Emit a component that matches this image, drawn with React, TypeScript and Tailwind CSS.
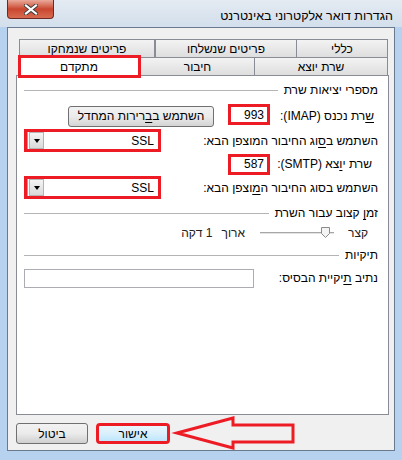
import React from "react";

const red = "border-[#ed1c24]";

function U({ children }: { children: React.ReactNode }) {
  return <span className="underline underline-offset-[2px]">{children}</span>;
}

function GroupTitle({ children }: { children: React.ReactNode }) {
  return (
    <div className="flex items-center gap-[6px] h-[14px]">
      <span className="whitespace-nowrap">{children}</span>
      <div className="flex-1 h-px bg-[#b4b4b4]" />
    </div>
  );
}

function Combo() {
  return (
    <div className={`w-[137px] h-[23px] border-[3px] ${red} bg-white flex items-center`}>
      <span className="flex-1 text-right pr-[4px] leading-none">SSL</span>
      <div className="w-[17px] h-[17px] border-l border-[#a0a0a0] pl-px flex">
        <div className="flex-1 border border-[#b4b4b4] bg-gradient-to-b from-[#f5f5f5] to-[#d9d9d9] flex items-center justify-center">
          <div className="w-0 h-0 border-l-[3.5px] border-r-[3.5px] border-t-[4px] border-l-transparent border-r-transparent border-t-black" />
        </div>
      </div>
    </div>
  );
}

function Tab({ label, className }: { label: string; className: string }) {
  return (
    <div
      className={`h-[18px] flex items-center justify-center border-t border-l border-[#898c95] bg-gradient-to-b from-[#f3f3f3] to-[#dedede] ${className}`}
    >
      {label}
    </div>
  );
}

export default function App() {
  return (
    <div
      dir="rtl"
      className="w-[402px] h-[460px] bg-[#b7d2ef] flex flex-col font-['Liberation_Sans','DejaVu_Sans',sans-serif] text-[12px] text-black leading-none"
    >
      {/* title bar */}
      <div className="h-[27px] bg-gradient-to-b from-[#e4ebf2] to-[#d3dfec] flex justify-between items-start pr-[9px] pl-[7px]">
        <span className="mt-[10px] text-[12.5px] whitespace-nowrap">הגדרות דואר אלקטרוני באינטרנט</span>
        <div className="w-[47px] h-[19px] rounded-b-[4px] border border-t-0 border-[#6e2a22] bg-gradient-to-b from-[#e9a99b] via-[#c9462f] to-[#d86b4f] flex items-center justify-center">
          <svg width="14" height="11" viewBox="0 0 14 11">
            <path d="M2 1.5 L12 9.5 M12 1.5 L2 9.5" stroke="#3b3b3b" strokeWidth="4" strokeLinecap="square" />
            <path d="M2 1.5 L12 9.5 M12 1.5 L2 9.5" stroke="#ffffff" strokeWidth="2.2" strokeLinecap="square" />
          </svg>
        </div>
      </div>

      {/* dialog body */}
      <div className="relative mx-[7px] h-[424px] border border-[#6a7a8e] bg-[#f0f0f0] pt-[11px] pl-[8px] pr-[5px]">
        <div className="w-[373px]">
          <div className="flex h-[18px] pr-px">
            <Tab label="כללי" className="w-[92px] border-r" />
            <Tab label="פריטים שנשלחו" className="w-[141px]" />
            <Tab label="פריטים שנמחקו" className="w-[136px] border-r" />
          </div>
          <div className="flex h-[18px] pr-px">
            <Tab label="שרת יוצא" className="w-[134px] border-r" />
            <Tab label="חיבור" className="w-[114px]" />
            <div className="relative w-[122px] h-[18px] border-t border-l border-r border-[#898c95] bg-white flex items-center justify-center z-10">
              מתקדם
              <div className={`absolute -top-[3px] left-[-1px] -right-[2px] -bottom-[3px] border-[3px] ${red}`} />
            </div>
          </div>

          {/* tab page */}
          <div className="h-[340px] border border-[#898c95] bg-white pl-[7px] pr-[10px] flex flex-col">
            <div className="mt-[7px]">
              <GroupTitle>מספרי יציאות שרת</GroupTitle>
            </div>

            <div className="mt-[8px] h-[22px] flex items-center">
              <span className="w-[108px] pr-[4px] whitespace-nowrap">
                <U>ש</U>רת נכנס (IMAP):
              </span>
              <div className={`w-[42px] h-[21px] border-[3px] ${red} bg-white flex items-center pr-[3px] -mt-[3px]`}>993</div>
              <button className="mr-[14px] w-[146px] h-[21px] rounded-[3px] border border-[#707070] bg-gradient-to-b from-[#f2f2f2] via-[#ebebeb] to-[#d4d4d4] leading-none">
                השתמש ב<U>ב</U>רירות המחדל
              </button>
            </div>

            <div className="mt-[2px] h-[23px] flex items-center justify-between">
              <span className="whitespace-nowrap">
                השתמש ב<U>ס</U>וג החיבור המוצפן הבא:
              </span>
              <Combo />
            </div>

            <div className="mt-[1px] h-[22px] flex items-center">
              <span className="w-[108px] pr-[6px] whitespace-nowrap">
                שרת י<U>ו</U>צא (SMTP):
              </span>
              <div className={`w-[42px] h-[21px] border-[3px] ${red} bg-white flex items-center pr-[3px]`}>587</div>
            </div>

            <div className="mt-[1px] h-[23px] flex items-center justify-between">
              <span className="whitespace-nowrap">
                השתמש בסוג החיבור ה<U>מ</U>וצפן הבא:
              </span>
              <Combo />
            </div>

            <div className="mt-[7px]">
              <GroupTitle>
                זמ<U>ן</U> קצוב עבור השרת
              </GroupTitle>
            </div>

            <div className="mt-[6px] h-[14px] flex items-center pr-[10px] text-[#222]">
              <span className="w-[20px]">קצר</span>
              <div className="relative mr-[14px] w-[74px] h-[14px] flex items-center">
                <div className="w-full h-[3px] border-t border-[#a6a6a6] border-b border-b-white bg-[#e3e3e3]" />
                <svg className="absolute left-[61px] top-[1px]" width="9" height="11" viewBox="0 0 9 11">
                  <path d="M0.5 0.5 H8.5 V6.5 L4.5 10.5 L0.5 6.5 Z" fill="#f4f4f4" stroke="#8a8a8a" />
                </svg>
              </div>
              <span className="mr-[15px]">ארוך</span>
              <span className="mr-[9px]">1 דקה</span>
            </div>

            <div className="mt-[8px]">
              <GroupTitle>תיקיות</GroupTitle>
            </div>

            <div className="mt-[6px] h-[20px] flex items-center justify-between">
              <span className="whitespace-nowrap">
                נתיב <U>ת</U>יקיית הבסיס:
              </span>
              <div className="w-[230px] h-[19px] border border-[#abadb3] bg-white" />
            </div>
          </div>
        </div>

        {/* buttons */}
        <div className="mt-[8px] flex items-center justify-end gap-[8px] pl-[0px]">
          <div className={`w-[74px] h-[21px] rounded-[4px] border-[3px] ${red} flex`}>
            <button className="flex-1 rounded-[2px] bg-gradient-to-b from-[#eaf6fd] via-[#d9f0fc] to-[#bee6fd] leading-none">
              אישור
            </button>
          </div>
          <button className="w-[72px] h-[21px] rounded-[3px] border border-[#707070] bg-gradient-to-b from-[#f2f2f2] via-[#ebebeb] to-[#cfcfcf] leading-none">
            ביטול
          </button>
        </div>

        <svg className="absolute left-[162px] top-[386px]" width="132" height="38" viewBox="0 0 132 38">
          <path
            d="M7 19 L63 4 L63 11 L123 11 L123 28 L63 28 L63 34 Z"
            fill="none"
            stroke="#ed1c24"
            strokeWidth="3"
            strokeLinejoin="miter"
          />
        </svg>
      </div>
    </div>
  );
}
